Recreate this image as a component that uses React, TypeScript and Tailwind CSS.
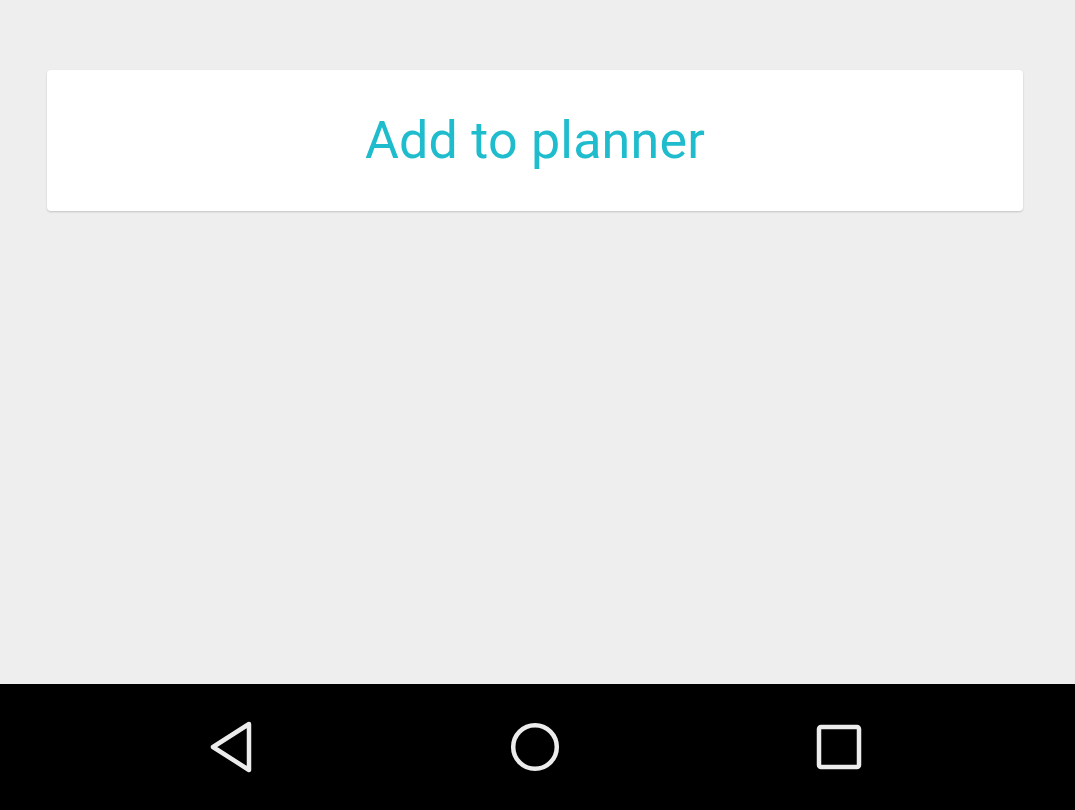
export default function App() {
  return (
    <div className="w-[1075px] h-[810px] bg-[#eeeeee] flex flex-col font-['Roboto',sans-serif]">
      <main className="flex-1 pl-[47px] pr-[52px] pt-[70px]">
        <button className="w-full h-[141px] bg-white rounded-[4px] shadow-[0_1px_2px_rgba(0,0,0,0.18)] flex items-center justify-center">
          <span className="text-[52px] leading-none text-[#1ebccc] tracking-[0.2px]">Add to planner</span>
        </button>
      </main>

      {/* Nav bar */}
      <nav className="h-[126px] bg-black flex items-center">
        <div className="ml-[79px] grid grid-cols-[304px_304px_304px] items-center">
          <div className="flex justify-center">
            <svg width="48" height="52" viewBox="0 0 48 52" fill="none">
              <path d="M42 3 L6 26 L42 49 Z" stroke="#ececec" strokeWidth="4.5" strokeLinejoin="round" />
            </svg>
          </div>
          <div className="flex justify-center">
            <svg width="52" height="52" viewBox="0 0 52 52" fill="none">
              <circle cx="26" cy="26" r="21.8" stroke="#ececec" strokeWidth="4.5" />
            </svg>
          </div>
          <div className="flex justify-center">
            <svg width="48" height="48" viewBox="0 0 48 48" fill="none">
              <rect x="4" y="4" width="40" height="40" rx="2" stroke="#ececec" strokeWidth="4.5" />
            </svg>
          </div>
        </div>
      </nav>
    </div>
  );
}
